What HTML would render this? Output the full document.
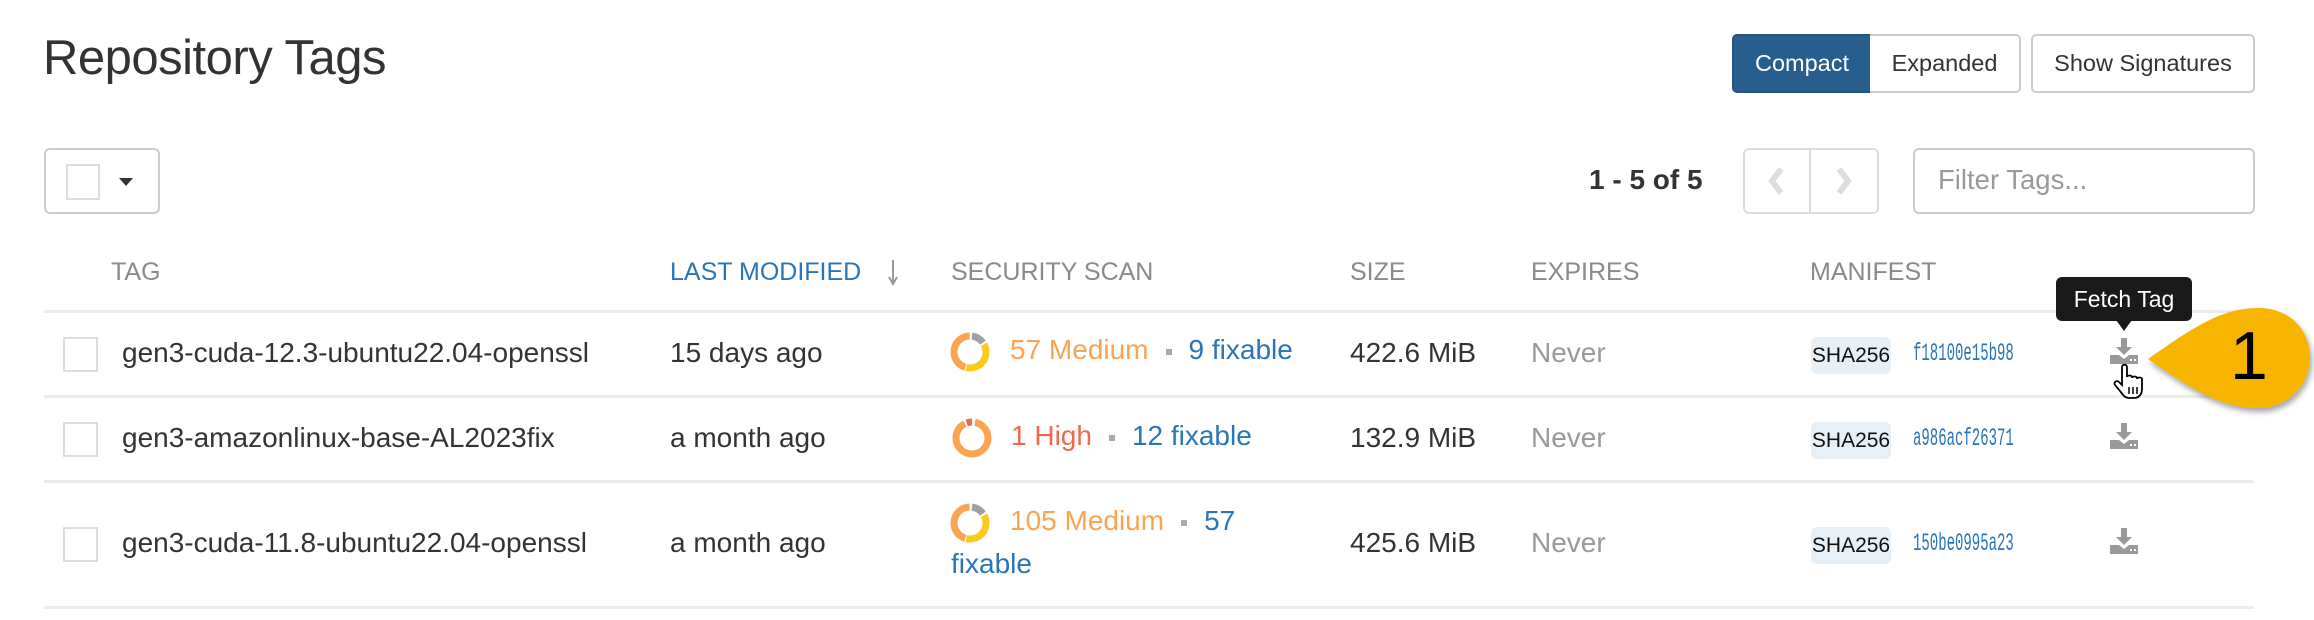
<!DOCTYPE html>
<html><head><meta charset="utf-8"><style>
*{box-sizing:border-box;margin:0;padding:0}
body{width:2314px;height:620px;background:#fff;font-family:"Liberation Sans",Arial,sans-serif;color:#333;position:relative;overflow:hidden}
.a{position:absolute;white-space:nowrap}
.btn{position:absolute;top:34px;height:59px;border:2px solid #ccc;font-size:23.5px;display:flex;align-items:center;justify-content:center;color:#333;background:#fff}
.hd{position:absolute;top:258px;font-size:25px;color:#8a8a8a;letter-spacing:0}
.line{position:absolute;left:44px;width:2210px;height:3px;background:#ececec}
.cb{position:absolute;left:63px;width:35px;height:35px;border:2px solid #ddd;background:#fff}
.t{position:absolute;font-size:28px;color:#333;white-space:nowrap}
.sha{position:absolute;left:1811px;width:80px;height:37px;background:#e7f0f7;border-radius:6px;font-size:21px;color:#111;display:flex;align-items:center;justify-content:center}
.hash{position:absolute;left:1913px;font-family:"Liberation Mono","DejaVu Sans Mono",monospace;font-size:25px;color:#2a75b8;transform:scaleX(0.56);transform-origin:left center}
.dot{display:inline-block;width:6px;height:6px;background:#aaa;margin:0 17px;vertical-align:middle}
.or{color:#f8a452}.rd{color:#ee6a4c}.bl{color:#2a75b8}
</style></head><body>
<div class="a" style="left:43px;top:30px;font-size:49px;color:#333;letter-spacing:-0.5px">Repository Tags</div>

<div class="btn" style="left:1732px;width:140px;background:#285e8e;border-color:#245580;color:#fff;border-radius:5px 0 0 5px">Compact</div>
<div class="btn" style="left:1870px;width:151px;border-left:none;border-radius:0 5px 5px 0">Expanded</div>
<div class="btn" style="left:2031px;width:224px;border-radius:5px">Show Signatures</div>

<div class="a" style="left:44px;top:148px;width:116px;height:66px;border:2px solid #ccc;border-radius:6px"></div>
<div class="a" style="left:66px;top:164px;width:34px;height:36px;border:2px solid #ddd"></div>
<div class="a" style="left:119px;top:178px;width:0;height:0;border-left:7px solid transparent;border-right:7px solid transparent;border-top:8px solid #333"></div>

<div class="a" style="left:1589px;top:164px;font-size:28px;font-weight:bold;color:#333">1 - 5 of 5</div>
<div class="a" style="left:1743px;top:148px;width:136px;height:66px;border:2px solid #ddd;border-radius:6px"></div>
<div class="a" style="left:1809px;top:148px;width:2px;height:66px;background:#ddd"></div>
<svg class="a" style="left:1766px;top:166px" width="20" height="30"><path d="M15 3 L6 15 L15 27" stroke="#ddd" stroke-width="6" fill="none"/></svg>
<svg class="a" style="left:1834px;top:166px" width="20" height="30"><path d="M5 3 L14 15 L5 27" stroke="#ddd" stroke-width="6" fill="none"/></svg>
<div class="a" style="left:1913px;top:148px;width:342px;height:66px;border:2px solid #ccc;border-radius:6px"></div>
<div class="a" style="left:1938px;top:164px;font-size:27.5px;color:#999">Filter Tags...</div>

<div class="hd" style="left:111px">TAG</div>
<div class="hd" style="left:670px;color:#2a75b8">LAST MODIFIED</div>
<svg class="a" style="left:886px;top:258px" width="14" height="28"><path d="M7 2 V24 M3 19 L7 26 L11 19" stroke="#999" stroke-width="2" fill="none"/></svg>
<div class="hd" style="left:951px">SECURITY SCAN</div>
<div class="hd" style="left:1350px">SIZE</div>
<div class="hd" style="left:1531px">EXPIRES</div>
<div class="hd" style="left:1810px">MANIFEST</div>

<div class="line" style="top:310px"></div>
<div class="line" style="top:395px"></div>
<div class="line" style="top:480px"></div>
<div class="line" style="top:606px"></div>

<!-- row 1 -->
<div class="cb" style="top:337px"></div>
<div class="t" style="left:122px;top:337px">gen3-cuda-12.3-ubuntu22.04-openssl</div>
<div class="t" style="left:670px;top:337px">15 days ago</div>
<svg class="a" style="left:949px;top:331px" width="42" height="42" viewBox="0 0 42 42"><g fill="none" stroke-width="7" transform="rotate(-90 21 21)">
<circle cx="21" cy="21" r="16" stroke="#f8a452" stroke-dasharray="45 100" stroke-dashoffset="-55"/>
<circle cx="21" cy="21" r="16" stroke="#a0a0a0" stroke-dasharray="13 100" stroke-dashoffset="-2"/>
<circle cx="21" cy="21" r="16" stroke="#f8cb1d" stroke-dasharray="37 100" stroke-dashoffset="-17"/></g></svg>
<div class="t" style="left:1010px;top:334px"><span class="or">57 Medium</span><span class="dot"></span><span class="bl">9 fixable</span></div>
<div class="t" style="left:1350px;top:337px">422.6 MiB</div>
<div class="t" style="left:1531px;top:337px;color:#999">Never</div>
<div class="sha" style="top:337px">SHA256</div>
<div class="hash" style="top:339px">f18100e15b98</div>

<!-- row 2 -->
<div class="cb" style="top:422px"></div>
<div class="t" style="left:122px;top:422px">gen3-amazonlinux-base-AL2023fix</div>
<div class="t" style="left:670px;top:422px">a month ago</div>
<svg class="a" style="left:951px;top:417px" width="42" height="42" viewBox="0 0 42 42"><g fill="none" stroke-width="7" transform="rotate(-90 21 21)">
<circle cx="21" cy="21" r="16" stroke="#f8a452" stroke-dasharray="90 100" stroke-dashoffset="-3"/>
<circle cx="21" cy="21" r="16" stroke="#ee6a4c" stroke-dasharray="6 100" stroke-dashoffset="-95"/></g></svg>
<div class="t" style="left:1011px;top:420px"><span class="rd">1 High</span><span class="dot"></span><span class="bl">12 fixable</span></div>
<div class="t" style="left:1350px;top:422px">132.9 MiB</div>
<div class="t" style="left:1531px;top:422px;color:#999">Never</div>
<div class="sha" style="top:422px">SHA256</div>
<div class="hash" style="top:424px">a986acf26371</div>

<!-- row 3 -->
<div class="cb" style="top:527px"></div>
<div class="t" style="left:122px;top:527px">gen3-cuda-11.8-ubuntu22.04-openssl</div>
<div class="t" style="left:670px;top:527px">a month ago</div>
<svg class="a" style="left:949px;top:502px" width="42" height="42" viewBox="0 0 42 42"><g fill="none" stroke-width="7" transform="rotate(-90 21 21)">
<circle cx="21" cy="21" r="16" stroke="#f8a452" stroke-dasharray="45 100" stroke-dashoffset="-55"/>
<circle cx="21" cy="21" r="16" stroke="#a0a0a0" stroke-dasharray="13 100" stroke-dashoffset="-2"/>
<circle cx="21" cy="21" r="16" stroke="#f8cb1d" stroke-dasharray="37 100" stroke-dashoffset="-17"/></g></svg>
<div class="t" style="left:1010px;top:505px"><span class="or">105 Medium</span><span class="dot"></span><span class="bl">57</span></div>
<div class="t bl" style="left:951px;top:548px">fixable</div>
<div class="t" style="left:1350px;top:527px">425.6 MiB</div>
<div class="t" style="left:1531px;top:527px;color:#999">Never</div>
<div class="sha" style="top:527px">SHA256</div>
<div class="hash" style="top:529px">150be0995a23</div>

<!-- download icons -->
<svg class="a" style="left:2110px;top:338px" width="28" height="26" viewBox="0 0 28 26"><path d="M11 0h6v9h5l-8 8-8-8h5z" fill="#9a9a9a"/><path d="M0 17h9l5 4 5-4h9v9H0z" fill="#9a9a9a"/><rect x="20" y="21" width="2" height="2" fill="#fff"/><rect x="24" y="21" width="2" height="2" fill="#fff"/></svg>
<svg class="a" style="left:2110px;top:423px" width="28" height="26" viewBox="0 0 28 26"><path d="M11 0h6v9h5l-8 8-8-8h5z" fill="#9a9a9a"/><path d="M0 17h9l5 4 5-4h9v9H0z" fill="#9a9a9a"/><rect x="20" y="21" width="2" height="2" fill="#fff"/><rect x="24" y="21" width="2" height="2" fill="#fff"/></svg>
<svg class="a" style="left:2110px;top:528px" width="28" height="26" viewBox="0 0 28 26"><path d="M11 0h6v9h5l-8 8-8-8h5z" fill="#9a9a9a"/><path d="M0 17h9l5 4 5-4h9v9H0z" fill="#9a9a9a"/><rect x="20" y="21" width="2" height="2" fill="#fff"/><rect x="24" y="21" width="2" height="2" fill="#fff"/></svg>

<!-- tooltip -->
<div class="a" style="left:2056px;top:277px;width:136px;height:44px;background:#1a1a1a;border-radius:6px;color:#fff;font-size:23px;display:flex;align-items:center;justify-content:center">Fetch Tag</div>
<div class="a" style="left:2116px;top:320px;width:0;height:0;border-left:8px solid transparent;border-right:8px solid transparent;border-top:11px solid #1a1a1a"></div>

<!-- cursor -->
<svg class="a" style="left:2113px;top:364px" width="34" height="36" viewBox="0 0 34 36"><path d="M9 3c0-3 5-3 5 0v10c0-2 5-2 5 0v1c0-2 5-2 5 0v1c0-2 5-2 5 0v10c0 5-3 9-8 9h-5c-4 0-6-3-9-7l-5-6c-2-3 2-5 4-3l3 3z" fill="#fff" stroke="#000" stroke-width="1.8"/><path d="M16 23v7M20 23v7M24 23v7" stroke="#000" stroke-width="1.5"/></svg>

<!-- callout -->
<svg class="a" style="left:2140px;top:300px" width="174" height="120" viewBox="0 0 174 120"><defs><filter id="s" x="-20%" y="-20%" width="140%" height="150%"><feDropShadow dx="2" dy="4" stdDeviation="3" flood-color="#000" flood-opacity="0.35"/></filter></defs><path d="M8 59 C50 30 80 8 118 8 C150 8 170 30 170 57 C170 85 148 108 118 108 C80 108 50 88 8 59 Z" fill="#f7b500" filter="url(#s)"/></svg>
<div class="a" style="left:2230px;top:318px;font-size:68px;color:#000;line-height:76px">1</div>
</body></html>
